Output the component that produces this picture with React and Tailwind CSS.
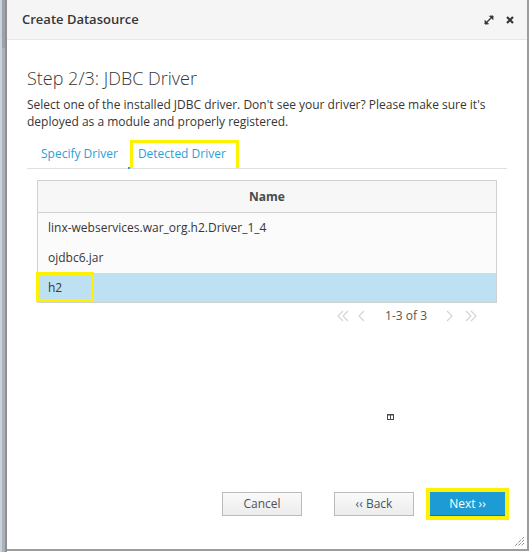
import React from "react";

const font = { fontFamily: "'Open Sans', 'Liberation Sans', sans-serif" };

function Chevron({ double, left }) {
    // pagination arrow, thin light-gray strokes
    const d = left
        ? double
            ? "M7 1 L2 6 L7 11 M12 1 L7 6 L12 11"
            : "M8 1 L3 6 L8 11"
        : double
            ? "M2 1 L7 6 L2 11 M7 1 L12 6 L7 11"
            : "M4 1 L9 6 L4 11";
    return (
        <svg width="14" height="12" viewBox="0 0 14 12" fill="none">
            <path d={d} stroke="#d4d4d4" strokeWidth="1.2" />
        </svg>
    );
}

export default function App() {
    const rows = ["linx-webservices.war_org.h2.Driver_1_4", "ojdbc6.jar"];

    return (
        <div className="w-[530px] h-[552px] bg-white flex overflow-hidden" style={font}>
            {/* left edge of the window behind */}
            <div className="w-[2px] h-full bg-[#c9d2de]" />
            <div className="w-[3px] h-full flex flex-col">
                <div className="h-[48px] bg-[#9ea3aa]" />
                <div className="flex-1 bg-[#aeb3ba]" />
            </div>
            <div className="w-[2px] h-full bg-[#8f8f8f]" />

            {/* dialog */}
            <div className="w-[522px] h-[551px] flex flex-col border-r-2 border-b-2 border-[#9c9c9c] relative">
                <div className="h-[40px] shrink-0 bg-[#f5f5f5] border-b border-[#e6e6e6] flex items-center pl-[15px] pr-[13px]">
                    <span className="text-[13px] font-semibold text-[#363636] flex-1">Create Datasource</span>
                    <svg width="10" height="10" viewBox="0 0 10 10" className="mr-[12px]">
                        <path d="M1 9 L9 1" stroke="#363636" strokeWidth="1.3" />
                        <path d="M5.5 1 L9 1 L9 4.5 Z" fill="#363636" stroke="#363636" strokeWidth="0.8" />
                        <path d="M1 5.5 L1 9 L4.5 9 Z" fill="#363636" stroke="#363636" strokeWidth="0.8" />
                    </svg>
                    <svg width="8" height="8" viewBox="0 0 8 8">
                        <path d="M1 1 L7 7 M7 1 L1 7" stroke="#363636" strokeWidth="2.2" />
                    </svg>
                </div>

                <div className="flex-1 flex flex-col px-[20px]">
                    <h3 className="mt-[27px] text-[18px] leading-[22px] font-light text-[#363636]">Step 2/3: JDBC Driver</h3>
                    <p className="mt-[7px] text-[12px] leading-[17px] text-[#363636]">
                        Select one of the installed JDBC driver. Don't see your driver? Please make sure it's
                        <br />
                        deployed as a module and properly registered.
                    </p>

                    {/* tabs */}
                    <div className="mt-[10px] h-[29px] flex items-end border-b border-[#e0e0e0] text-[12px] text-[#2a9fd8] relative">
                        <div className="h-[28px] flex items-center pl-[14px] pr-[12px]">Specify Driver</div>
                        <div className="h-[28px] flex items-center pb-[3px] pl-[5px] pr-[10px] border-[3px] border-b-0 border-[#fff200]">
                            Detected Driver
                        </div>
                        <div className="absolute left-[101px] bottom-[-1px] w-[2px] h-[2px] bg-[#2a9fd8]" />
                    </div>

                    {/* table */}
                    <div className="mt-[11px] mx-[10px] border border-[#d1d1d1] text-[12px] text-[#363636]">
                        <div className="h-[32px] bg-[#f7f7f7] border-b border-[#d1d1d1] flex items-center justify-center font-bold text-[#4a4a4a]">
                            Name
                        </div>
                        {rows.map((r) => (
                            <div key={r} className="h-[30px] bg-[#fbfbfb] flex items-center pl-[10px]">
                                {r}
                            </div>
                        ))}
                        <div className="h-[29px] bg-[#bee0f3] flex items-center pl-[10px] relative">
                            h2
                            <div className="absolute left-[-2px] top-[-1px] w-[58px] h-[30px] border-[3px] border-[#fff200]" />
                        </div>
                    </div>

                    {/* pagination */}
                    <div className="h-[26px] flex items-center justify-end pr-[29px] text-[12px] text-[#555]">
                        <Chevron double left />
                        <div className="w-[6px]" />
                        <Chevron left />
                        <span className="ml-[15px] mr-[16px]">1-3 of 3</span>
                        <Chevron />
                        <div className="w-[7px]" />
                        <Chevron double />
                    </div>

                    <div className="mt-[85px] pl-[360px] flex">
                        <svg width="7" height="6" viewBox="0 0 7 6">
                            <rect x="0.5" y="0.5" width="6" height="5" fill="none" stroke="#4a4a4a" />
                            <rect x="0" y="0" width="7" height="1.5" fill="#4a4a4a" />
                            <path d="M3.5 1 L3.5 6" stroke="#4a4a4a" />
                        </svg>
                    </div>

                    <div className="flex-1" />

                    {/* footer */}
                    <div className="flex items-center justify-end pb-[29px] mr-[-2px] text-[12px]">
                        <button className="w-[80px] h-[24px] border border-[#bbb] bg-gradient-to-b from-[#fafafa] to-[#ececec] text-[#4d5258]">
                            Cancel
                        </button>
                        <button className="ml-[32px] w-[80px] h-[24px] border border-[#bbb] bg-gradient-to-b from-[#fafafa] to-[#ececec] text-[#4d5258]">
                            ‹‹ Back
                        </button>
                        <div className="ml-[12px] border-[4px] border-[#fff200] flex">
                            <button className="w-[75px] h-[24px] bg-[#1c9bd4] border-b border-[#1177aa] text-white">
                                Next ››
                            </button>
                        </div>
                    </div>
                </div>

                {/* resize grip */}
                <svg width="11" height="11" viewBox="0 0 11 11" className="absolute right-[2px] bottom-[2px]">
                    <path d="M10 1 L1 10 M10 4 L4 10 M10 7 L7 10" stroke="#555" strokeWidth="1" strokeDasharray="1 1" />
                </svg>
            </div>
        </div>
    );
}
